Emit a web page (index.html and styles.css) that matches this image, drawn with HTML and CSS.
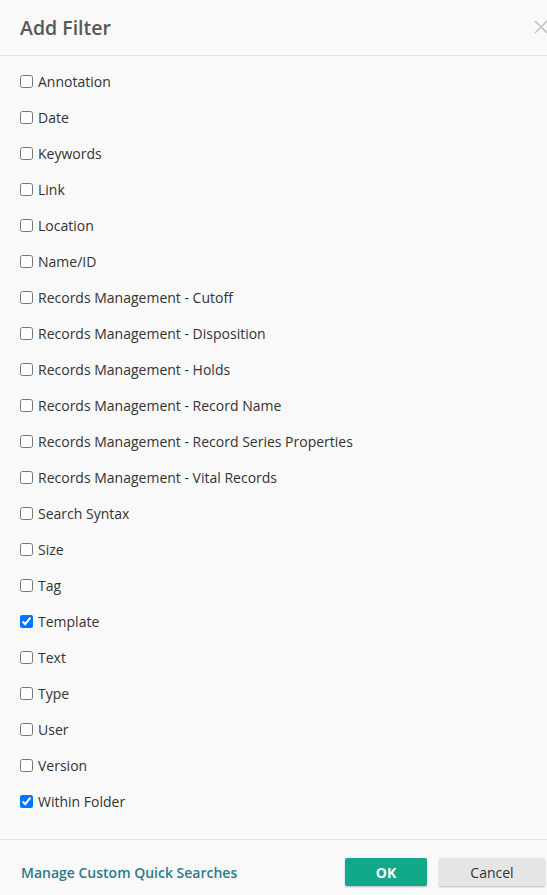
FILE: index.html
```html
<!DOCTYPE html>
<html>
<head>
<meta charset="utf-8">
<link rel="stylesheet" href="styles.css">
</head>
<body>
<div class="dialog">
  <div class="header">
    <h1 class="title">Add Filter</h1>
    <svg class="close" width="14" height="14" viewBox="0 0 14 14"><path d="M1 1L13 13M13 1L1 13" stroke="#c4c4c4" stroke-width="1.6" fill="none"/></svg>
  </div>
  <ul class="list">
    <li><label><input type="checkbox">Annotation</label></li>
    <li><label><input type="checkbox">Date</label></li>
    <li><label><input type="checkbox">Keywords</label></li>
    <li><label><input type="checkbox">Link</label></li>
    <li><label><input type="checkbox">Location</label></li>
    <li><label><input type="checkbox">Name/ID</label></li>
    <li><label><input type="checkbox">Records Management - Cutoff</label></li>
    <li><label><input type="checkbox">Records Management - Disposition</label></li>
    <li><label><input type="checkbox">Records Management - Holds</label></li>
    <li><label><input type="checkbox">Records Management - Record Name</label></li>
    <li><label><input type="checkbox">Records Management - Record Series Properties</label></li>
    <li><label><input type="checkbox">Records Management - Vital Records</label></li>
    <li><label><input type="checkbox">Search Syntax</label></li>
    <li><label><input type="checkbox">Size</label></li>
    <li><label><input type="checkbox">Tag</label></li>
    <li><label><input type="checkbox" checked>Template</label></li>
    <li><label><input type="checkbox">Text</label></li>
    <li><label><input type="checkbox">Type</label></li>
    <li><label><input type="checkbox">User</label></li>
    <li><label><input type="checkbox">Version</label></li>
    <li><label><input type="checkbox" checked>Within Folder</label></li>
  </ul>
  <div class="footer">
    <a class="manage" href="#">Manage Custom Quick Searches</a>
    <div class="buttons">
      <button class="btn ok">OK</button>
      <button class="btn cancel">Cancel</button>
    </div>
  </div>
</div>
</body>
</html>
```
FILE: styles.css
```css
html, body {
  margin: 0;
  padding: 0;
  background: #f9f9f9;
  overflow: hidden;
}
body {
  font-family: "Open Sans", "Liberation Sans", sans-serif;
  color: #333;
}
.dialog {
  width: 560px;
  height: 895px;
  display: flex;
  flex-direction: column;
}
.header {
  height: 55px;
  border-bottom: 1px solid #e2e2e2;
  display: flex;
  align-items: center;
  justify-content: space-between;
  padding: 0 12px 0 20px;
  box-sizing: content-box;
}
.title {
  margin: 0;
  font-size: 19.5px;
  font-weight: 600;
  color: #585858;
  line-height: 1;
}
.close {
  margin-top: -2px;
}
.list {
  list-style: none;
  margin: 0;
  padding: 7px 0 20px 20px;
}
.list li {
  height: 36px;
  display: flex;
  align-items: center;
}
.list label {
  display: flex;
  align-items: center;
  gap: 5px;
  font-size: 14px;
  color: #333;
}
.list input {
  margin: 0;
  width: 13px;
  height: 13px;
}
.footer {
  border-top: 1px solid #e2e2e2;
  flex: 1;
  display: flex;
  align-items: center;
  justify-content: space-between;
  padding: 9px 15px 0 21px;
}
.manage {
  color: #2b7c8c;
  font-weight: 600;
  font-size: 14px;
  text-decoration: none;
}
.buttons {
  display: flex;
  gap: 12px;
}
.btn {
  height: 28px;
  border: none;
  border-radius: 2px;
  font-family: "Open Sans", "Liberation Sans", sans-serif;
  font-size: 14px;
  box-shadow: 0 1px 2px rgba(0,0,0,0.25);
  cursor: pointer;
}
.ok {
  width: 82px;
  background: #12a88a;
  color: #fff;
  font-weight: 700;
}
.cancel {
  width: 106px;
  background: #e5e5e5;
  color: #333;
}
```
